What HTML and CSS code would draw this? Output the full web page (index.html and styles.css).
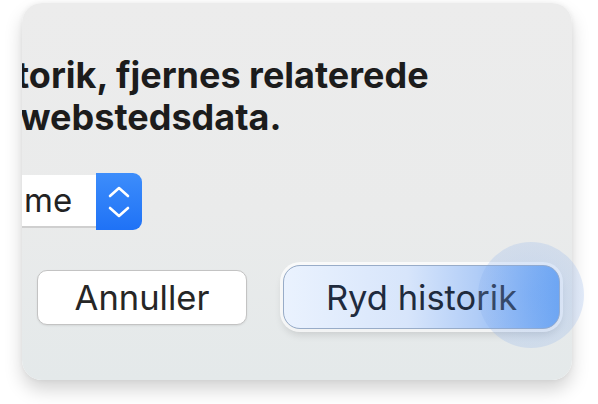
FILE: index.html
```html
<!DOCTYPE html>
<html lang="da">
<head>
<meta charset="utf-8">
<title>Ryd historik</title>
<link rel="stylesheet" href="styles.css">
</head>
<body>
<div class="stage">
  <div class="dialog">
    <p class="message">torik, fjernes relaterede<br>webstedsdata.</p>
    <div class="popup">
      <div class="popup-field">me</div>
      <div class="stepper">
        <svg class="chevrons" width="22" height="32" viewBox="0 0 22 32">
          <polyline points="2,10 11,2 20,10" />
          <polyline points="2,22 11,30 20,22" />
        </svg>
      </div>
    </div>
    <div class="buttons">
      <button class="btn btn-cancel">Annuller</button>
      <button class="btn btn-primary">Ryd historik</button>
    </div>
  </div>
  <div class="glow"></div>
</div>
</body>
</html>
```

FILE: styles.css
```css
html, body {
  margin: 0;
  padding: 0;
  background: #ffffff;
}

.stage {
  position: relative;
  width: 598px;
  height: 404px;
  padding: 3px 0 0 22px;
  box-sizing: border-box;
  overflow: hidden;
}

.dialog {
  width: 550px;
  height: 377px;
  border-radius: 20px;
  overflow: hidden;
  background: linear-gradient(180deg, #ececec 0%, #eaebeb 55%, #e4e9ea 100%);
  box-shadow: 0 10px 18px rgba(0, 0, 0, 0.17), 0 0 5px rgba(0, 0, 0, 0.06);
  font-family: Inter, "Liberation Sans", sans-serif;
  color: #1e1e1e;
}

.message {
  margin: 51px 0 0 -2px;
  text-indent: -4px;
  font-size: 36px;
  font-weight: 700;
  line-height: 42px;
  white-space: nowrap;
  color: #1c1c1c;
}

.popup {
  display: flex;
  margin-top: 35px;
  height: 57px;
}

.popup-field {
  width: 74px;
  height: 53px;
  margin-top: 2px;
  box-sizing: border-box;
  background: #ffffff;
  border-bottom: 2px solid #cfcfcf;
  font-size: 33px;
  line-height: 50px;
  padding-left: 2px;
  color: #222;
}

.stepper {
  width: 46px;
  height: 57px;
  border-radius: 0 9px 9px 0;
  background: linear-gradient(180deg, #3d8dfb 0%, #1f72f6 100%);
  display: flex;
  align-items: center;
  justify-content: center;
}

.chevrons polyline {
  fill: none;
  stroke: #ffffff;
  stroke-width: 2.6;
  stroke-linecap: round;
  stroke-linejoin: round;
}

.buttons {
  display: flex;
  align-items: center;
  gap: 36px;
  margin: 35px 0 0 15px;
}

.btn {
  font-family: Inter, "Liberation Sans", sans-serif;
  font-size: 34.5px;
  padding: 0;
  margin: 0;
  cursor: default;
}

.btn-cancel {
  width: 210px;
  height: 55px;
  background: #ffffff;
  border: 1.5px solid #c3c3c3;
  border-radius: 10px;
  color: #262626;
  box-shadow: 0 1px 2px rgba(0, 0, 0, 0.08);
}

.btn-primary {
  width: 277px;
  height: 64px;
  border: 1.5px solid #98acc8;
  border-radius: 17px;
  color: #1f2b3e;
  background: linear-gradient(90deg, #eaf2fe 0%, #d7e5fb 45%, #b1cdf7 70%, #6aa6f5 100%);
  box-shadow: 0 0 0 3px rgba(255, 255, 255, 0.75), 0 5px 9px rgba(0, 0, 0, 0.14);
}

.glow {
  position: absolute;
  left: 478px;
  top: 242px;
  width: 106px;
  height: 106px;
  border-radius: 50%;
  background: radial-gradient(circle, rgba(110, 160, 240, 0.28) 0%, rgba(130, 170, 235, 0.22) 70%, rgba(150, 180, 230, 0.12) 100%);
  pointer-events: none;
}
```
